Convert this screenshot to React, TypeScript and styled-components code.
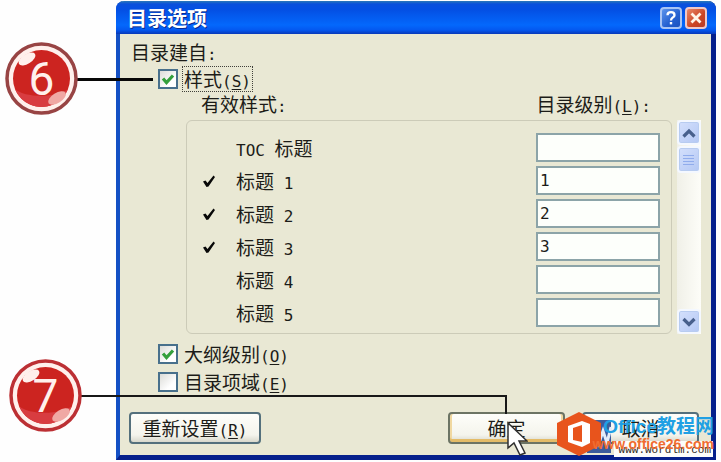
import React, { useState } from "react";
import styled, { createGlobalStyle, css } from "styled-components";

const GlobalStyle = createGlobalStyle`
  * { box-sizing: border-box; }
  body {
    margin: 0;
    background: #fefefe;
    color: #1c1c18;
    font: 19px/24px "Noto Sans CJK SC", sans-serif;
  }
`;

const Page = styled.main`
  position: relative;
  padding: 1px 5px 2px 116px;
`;

const Dialog = styled.section`
  display: flex;
  flex-direction: column;
  border: solid #0a3fc4;
  border-width: 0 5px 5px 4px;
  border-color: #0a3fc4 #06208c #06208c #1450c4;
  border-radius: 8px 8px 0 0;
  background: #e9e8d4;
`;

const TitleBar = styled.header`
  display: flex;
  align-items: center;
  gap: 3px;
  height: 33px;
  margin: 0 -5px 0 -4px;
  padding: 1px 9px 0 11px;
  border-radius: 8px 8px 0 0;
  background: linear-gradient(#2a78b8 0, #0a50dc 3px, #0450e4 9px, #0468fc 24px, #0458f0 29px, #0838b8 33px);
`;

const Title = styled.h1`
  flex: 1;
  margin: 0;
  color: #fff;
  font-size: 20px;
  line-height: 24px;
  font-weight: 700;
  text-shadow: 1px 1px #0a2a90;
`;

const CaptionButton = styled.button<{ $close?: boolean }>`
  display: flex;
  align-items: center;
  justify-content: center;
  width: 22px;
  height: 22px;
  padding: 0;
  border: 2px solid ${(p) => (p.$close ? "#f0c8c8" : "#a8c4f4")};
  border-radius: 4px;
  background: ${(p) =>
    p.$close ? "linear-gradient(135deg, #e88868, #cc4424 60%, #b83c28)" : "linear-gradient(135deg, #5c94ec, #2460d0 60%, #1c54c0)"};
`;

const Body = styled.div`
  padding: 6px 12px 11px 9px;
`;

const Latin = styled.span`
  font-family: "DejaVu Sans Mono", monospace;
  font-size: 16px;
  line-height: 0;
  u { text-underline-offset: 2px; }
`;

const Intro = styled.p`
  margin: 0 0 2px 2px;
`;

const CheckRow = styled.label`
  display: flex;
  align-items: center;
  gap: 5px;
  height: 28px;
  margin-left: 29px;
`;

const FirstCheckRow = styled(CheckRow)`
  height: 26px;
`;

const CheckBoxFrame = styled.span`
  display: grid;
  width: 20px;
  height: 20px;
  & > * { grid-area: 1 / 1; }
`;

const CheckBoxInput = styled.input`
  appearance: none;
  width: 20px;
  height: 20px;
  margin: 0;
  border: 2px solid #48708c;
  background: linear-gradient(135deg, #dcdcd8, #fff 70%);
`;

const CheckMark = styled.svg`
  width: 20px;
  height: 20px;
  pointer-events: none;
`;

const CheckText = styled.span<{ $focused?: boolean }>`
  padding: 0 1px;
  ${(p) =>
    p.$focused &&
    css`
      outline: 1px dotted #40403a;
    `}
`;

const ColumnHeads = styled.div`
  display: flex;
  justify-content: space-between;
  height: 28px;
  padding: 0 48px 0 72px;
`;

const ListArea = styled.div`
  display: flex;
  gap: 5px;
  margin: 0 -2px 0 57px;
`;

const StyleList = styled.div`
  flex: 1;
  padding: 10px 11px 4px 14px;
  border: 1px solid #cccbb8;
  border-radius: 6px;
`;

const StyleRow = styled.label`
  display: grid;
  grid-template-columns: 35px 1fr 124px;
  align-items: center;
  height: 33px;
`;

const RowMark = styled.svg`
  width: 16px;
  height: 16px;
`;

const LevelInput = styled.input`
  width: 100%;
  height: 29px;
  padding: 0 2px;
  border: 2px solid #8ca4a8;
  border-radius: 0;
  background: #fdfffb;
  color: #1c1c18;
  font: 16px "DejaVu Sans Mono", monospace;
`;

const ScrollBar = styled.div`
  display: flex;
  flex-direction: column;
  gap: 1px;
  width: 24px;
  background: linear-gradient(90deg, #f0f0e8, #fdfdf8);
`;

const ScrollButton = styled.button`
  display: flex;
  align-items: center;
  justify-content: center;
  width: 24px;
  height: 25px;
  padding: 0;
  border: 2px solid #f4f8ff;
  border-radius: 4px;
  background: linear-gradient(135deg, #d4e0fc, #b4c8f4);
  box-shadow: inset 0 0 0 1px #b8ccf0;
`;

const ScrollThumb = styled(ScrollButton)`
  height: 27px;
  margin-bottom: auto;
`;

const Outline = styled.div`
  margin-top: 6px;
`;

const Footer = styled.footer`
  display: grid;
  grid-template-columns: 132px 1fr 117px 117px;
  column-gap: 17px;
  margin-top: 16px;
`;

const PushButton = styled.button<{ $default?: boolean }>`
  position: relative;
  height: 32px;
  padding: 0;
  border: 2px solid #54707c;
  border-radius: 4px;
  background: linear-gradient(#fefefa, #f4f4ec 75%, #d8d8cc);
  color: #1c1c18;
  font: 19px/24px "Noto Sans CJK SC", sans-serif;
  ${(p) =>
    p.$default &&
    css`
      border-color: #6c7464;
      box-shadow: inset 0 -3px #e4bc68, inset 2px 0 #f0d8a0, inset -2px 0 #f0d8a0;
    `}
`;

const ConfirmButton = styled(PushButton)`
  grid-column: 3;
`;

const Pointer = styled.svg`
  position: absolute;
  left: 56px;
  top: 7px;
  width: 22px;
  height: 36px;
`;

const Callout = styled.div<{ $lower?: boolean }>`
  position: absolute;
  left: ${(p) => (p.$lower ? 9 : 5)}px;
  top: ${(p) => (p.$lower ? 359 : 42)}px;
  width: 73px;
  height: 73px;
  display: grid;
  & > * { grid-area: 1 / 1; }
`;

const CalloutNumber = styled.span`
  place-self: center;
  color: #fff0ec;
  font: 46px/46px Roboto, sans-serif;
`;

const LeadLine = styled.div`
  position: absolute;
  left: 77px;
  top: 78px;
  width: 76px;
  height: 3px;
  background: #080808;
`;

const ElbowLine = styled.div`
  position: absolute;
  left: 81px;
  right: 214px;
  top: 395px;
  height: 19px;
  border: solid #181818;
  border-width: 2px 2px 0 0;
`;

const Watermark = styled.aside`
  position: absolute;
  right: 7px;
  bottom: 5px;
  display: flex;
  align-items: center;
  isolation: isolate;
  pointer-events: none;
`;

const MarkLogo = styled.svg`
  width: 57px;
  height: 46px;
  margin-right: -22px;
`;

const MarkText = styled.div`
  display: grid;
  grid-template-rows: 20px 14px;
  justify-items: end;
`;

const MarkName = styled.span`
  color: #20a0e4;
  font: 700 19px/20px "Liberation Sans", "Noto Sans CJK SC", sans-serif;
`;

const MarkSite = styled.span`
  color: #f06c30;
  font: 700 14px/14px "Liberation Sans", sans-serif;
`;

const OldSite = styled.span`
  position: absolute;
  right: 1px;
  bottom: 0;
  z-index: -1;
  padding: 2px 2px 0 5px;
  background: #fdfdfb;
  color: #302820;
  font: 11px/14px "Liberation Mono", monospace;
`;

const styleRows = [
  { name: <><Latin>TOC </Latin>标题</>, level: "" },
  { name: <>标题<Latin> 1</Latin></>, level: "1" },
  { name: <>标题<Latin> 2</Latin></>, level: "2" },
  { name: <>标题<Latin> 3</Latin></>, level: "3" },
  { name: <>标题<Latin> 4</Latin></>, level: "" },
  { name: <>标题<Latin> 5</Latin></>, level: "" },
];

function Key({ children }: { children: string }) {
  return <Latin>(<u>{children}</u>)</Latin>;
}

function CheckBox({ initial }: { initial: boolean }) {
  const [on, setOn] = useState(initial);
  return (
    <CheckBoxFrame>
      <CheckBoxInput type="checkbox" checked={on} onChange={() => setOn(!on)} />
      {on && (
        <CheckMark viewBox="0 0 20 20" aria-hidden="true">
          <path d="M5 9.5 8.5 13.5 15 6.5" fill="none" stroke="#34a03c" strokeWidth="3.2" />
        </CheckMark>
      )}
    </CheckBoxFrame>
  );
}

function Badge({ value, lower }: { value: string; lower?: boolean }) {
  return (
    <Callout $lower={lower}>
      <svg viewBox="0 0 73 73" aria-hidden="true">
        <circle cx="36.5" cy="36.5" r="34.5" fill="#fff0ec" stroke={lower ? "#bc3034" : "#984444"} strokeWidth="3.5" />
        <circle cx="36.5" cy="36.5" r="28.5" fill="#cc2420" />
        <path d="M10 47a28.5 28.5 0 0 0 53 0C54 55 21 57 10 47Z" fill="#d83c40" />
        <ellipse cx="22" cy="17" rx="9.5" ry="4.8" fill="#fff0ec" transform="rotate(-32 22 17)" />
        <ellipse cx="52" cy="56" rx="10" ry="5" fill="#f0a8a4" transform="rotate(-32 52 56)" />
      </svg>
      <CalloutNumber>{value}</CalloutNumber>
    </Callout>
  );
}

export default function App() {
  return (
    <Page>
      <GlobalStyle />
      <Dialog role="dialog" aria-labelledby="dialog-title">
        <TitleBar>
          <Title id="dialog-title">目录选项</Title>
          <CaptionButton aria-label="帮助">
            <svg width="14" height="16" viewBox="0 0 14 16" aria-hidden="true">
              <path d="M3.5 5.2C3.5 1.2 10.5 1.2 10.5 5.2 10.5 7.6 7 7.3 7 10.4" fill="none" stroke="#fff" strokeWidth="2.3" />
              <rect x="5.8" y="12" width="2.4" height="2.4" fill="#fff" />
            </svg>
          </CaptionButton>
          <CaptionButton $close aria-label="关闭">
            <svg width="14" height="14" viewBox="0 0 14 14" aria-hidden="true">
              <path d="m2.5 2.5 9 9m0-9-9 9" stroke="#fff4e8" strokeWidth="2.8" />
            </svg>
          </CaptionButton>
        </TitleBar>
        <Body>
          <Intro>目录建自<Latin>:</Latin></Intro>
          <FirstCheckRow>
            <CheckBox initial />
            <CheckText $focused>样式<Key>S</Key></CheckText>
          </FirstCheckRow>
          <ColumnHeads>
            <span>有效样式<Latin>:</Latin></span>
            <span>目录级别<Key>L</Key><Latin>:</Latin></span>
          </ColumnHeads>
          <ListArea>
            <StyleList>
              {styleRows.map((row, i) => (
                <StyleRow key={i}>
                  <RowMark viewBox="0 0 16 16" aria-hidden="true">
                    {row.level && <path d="M2 8.5 4.5 7.5 6.5 10 12.5 2.5 14 4 7.5 13.5 5.5 14Z" fill="#080808" />}
                  </RowMark>
                  <span>{row.name}</span>
                  <LevelInput type="text" defaultValue={row.level} />
                </StyleRow>
              ))}
            </StyleList>
            <ScrollBar>
              <ScrollButton aria-label="向上">
                <svg width="16" height="12" viewBox="0 0 16 12" aria-hidden="true">
                  <path d="m2.5 9.5 5.5-5.5 5.5 5.5" fill="none" stroke="#48608c" strokeWidth="3.2" />
                </svg>
              </ScrollButton>
              <ScrollThumb aria-label="滚动">
                <svg width="14" height="14" viewBox="0 0 14 14" aria-hidden="true">
                  <path d="M1 2.5h11M1 5.5h11M1 8.5h11M1 11.5h11" stroke="#90acec" />
                </svg>
              </ScrollThumb>
              <ScrollButton aria-label="向下">
                <svg width="16" height="12" viewBox="0 0 16 12" aria-hidden="true">
                  <path d="m2.5 3 5.5 5.5L13.5 3" fill="none" stroke="#48608c" strokeWidth="3.2" />
                </svg>
              </ScrollButton>
            </ScrollBar>
          </ListArea>
          <Outline>
            <CheckRow>
              <CheckBox initial />
              <CheckText>大纲级别<Key>O</Key></CheckText>
            </CheckRow>
            <CheckRow>
              <CheckBox initial={false} />
              <CheckText>目录项域<Key>E</Key></CheckText>
            </CheckRow>
          </Outline>
          <Footer>
            <PushButton>重新设置<Key>R</Key></PushButton>
            <ConfirmButton $default>
              确定
              <Pointer viewBox="0 0 22 36" aria-hidden="true">
                <path d="M2 2v25l6-5 6 12 5-2-6-12h8Z" fill="#fff" stroke="#303030" strokeWidth="1.5" />
              </Pointer>
            </ConfirmButton>
            <PushButton>取消</PushButton>
          </Footer>
        </Body>
      </Dialog>
      <LeadLine />
      <ElbowLine />
      <Badge value="6" />
      <Badge value="7" lower />
      <Watermark>
        <MarkLogo viewBox="0 0 57 46" aria-hidden="true">
          <path d="M30 9h24v33H30Z" fill="#3c5c9c" />
          <path d="m37 16 5 16 4-12 4 12 4-16" fill="none" stroke="#e4ecf8" strokeWidth="3" />
          <path d="M22 1 44 12v22L22 45 0 34V12Z" fill="#e8541c" />
          <path fillRule="evenodd" d="M11 15 25 10l8 3v19l-8 4-14-5ZM16 17v12l9 2V14Z" fill="#fff" />
        </MarkLogo>
        <MarkText>
          <OldSite>www.wordlm.com</OldSite>
          <MarkName>Office教程网</MarkName>
          <MarkSite>www.office26.com</MarkSite>
        </MarkText>
      </Watermark>
    </Page>
  );
}
